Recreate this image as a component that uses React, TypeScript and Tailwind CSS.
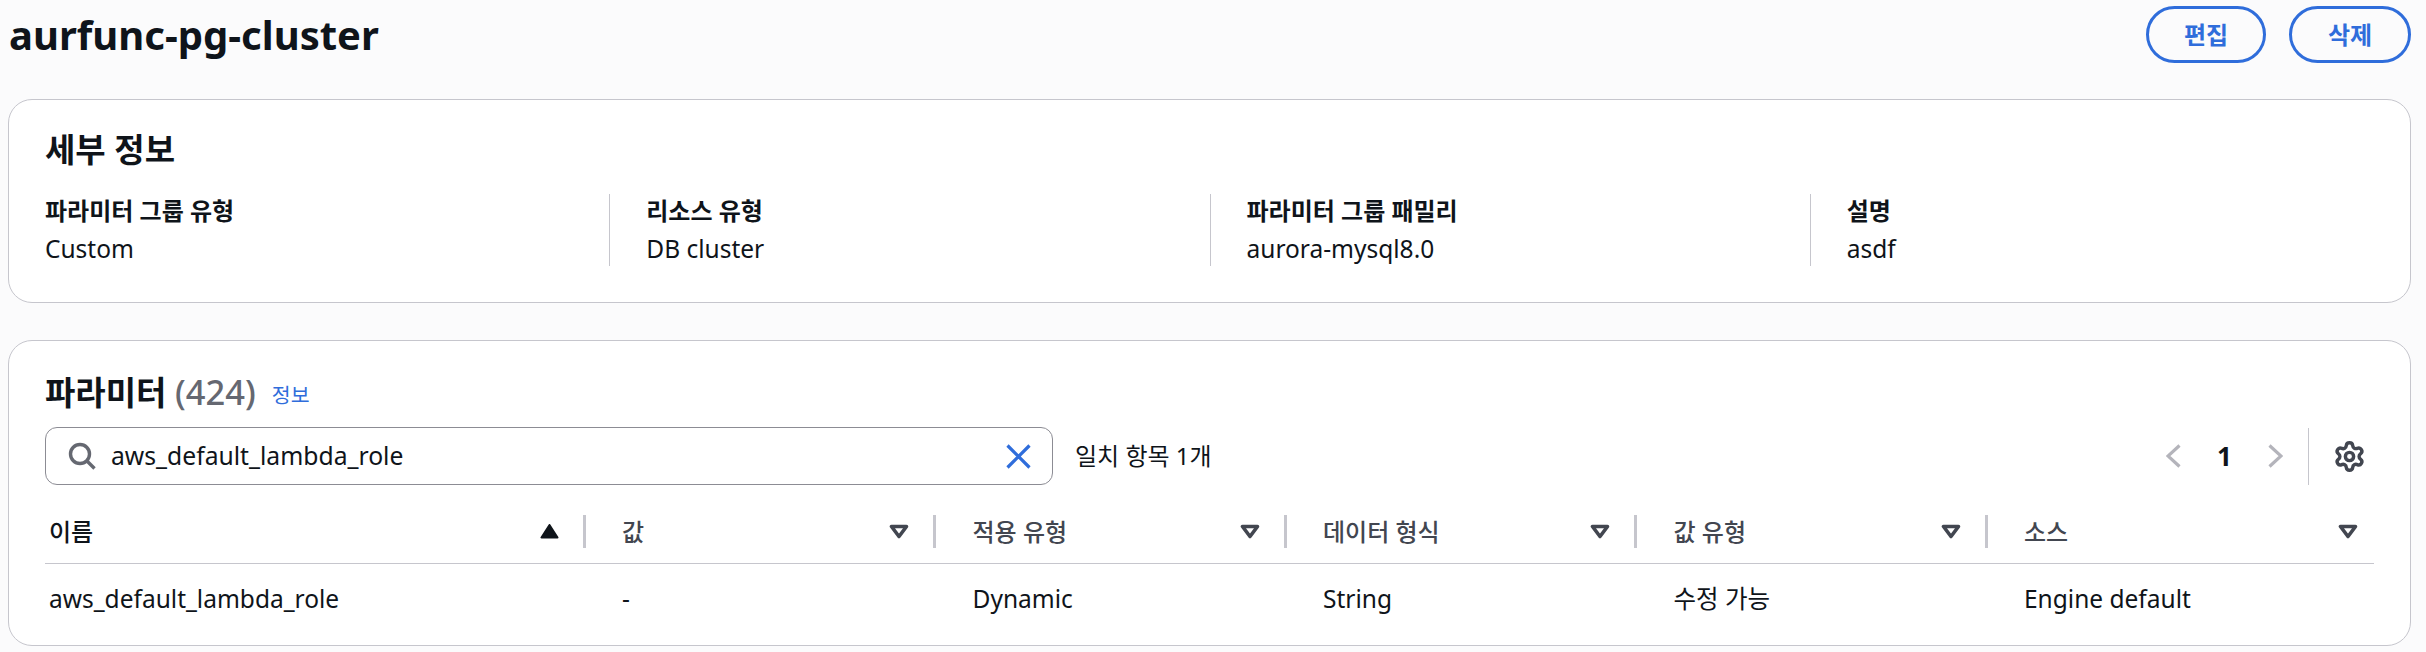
import { Settings } from 'lucide-react';

const details = [
  { label: '파라미터 그룹 유형', value: 'Custom' },
  { label: '리소스 유형', value: 'DB cluster' },
  { label: '파라미터 그룹 패밀리', value: 'aurora-mysql8.0' },
  { label: '설명', value: 'asdf' },
];

const columns = ['적용 유형', '데이터 형식', '값 유형'];

function SortDown() {
  return (
    <svg width="20" height="15" viewBox="0 0 20 15" className="shrink-0">
      <path d="M2.5 2.5h15L10 12.5z" fill="none" stroke="#424650" strokeWidth="3.6" strokeLinejoin="round" />
    </svg>
  );
}

function SortUp() {
  return (
    <svg width="19" height="15" viewBox="0 0 19 15" className="shrink-0">
      <path d="M1.5 13.5h16L9.5 1z" fill="#0f141a" stroke="#0f141a" strokeWidth="2" strokeLinejoin="round" />
    </svg>
  );
}

function HeaderCell({ label, last }: { label: string; last?: boolean }) {
  return (
    <div className="flex h-[33px] items-center justify-between border-l-[3px] border-[#c6c6cd] pl-[36.5px]">
      <span className="text-[24px] font-medium text-[#424650]">{label}</span>
      <span className={last ? 'mr-[16px]' : 'mr-[24px]'}>
        <SortDown />
      </span>
    </div>
  );
}

export default function App() {
  return (
    <div className="h-[652px] w-[2426px] overflow-hidden bg-[#fbfbfc] font-['Noto_Sans','Noto_Sans_CJK_KR',sans-serif] text-[#0f141a]">
      {/* Page header */}
      <div className="flex h-[99px] items-start justify-between pl-[9px] pr-[15px] pt-[6px]">
        <h1 className="text-[40px] font-bold leading-[58px]">aurfunc-pg-cluster</h1>
        <div className="flex gap-[23px]">
          <button className="h-[57px] w-[120px] rounded-full border-[3px] border-[#2f6ddb] text-[24px] font-bold text-[#2f6ddb]">편집</button>
          <button className="h-[57px] w-[122px] rounded-full border-[3px] border-[#2f6ddb] text-[24px] font-bold text-[#2f6ddb]">삭제</button>
        </div>
      </div>

      {/* Details */}
      <section className="mx-[8px] h-[204px] w-[2403px] rounded-[24px] border border-[#c6c6cd] bg-white pt-[29px]">
        <h2 className="pl-[36px] text-[33px] font-bold leading-[42px]">세부 정보</h2>
        <div className="mt-[23px] grid grid-cols-4">
          {details.map((item, i) => (
            <div key={item.label} className={`h-[72px] px-[36px] ${i > 0 ? 'border-l border-[#c6c6cd]' : ''}`}>
              <div className="text-[24px] font-bold leading-[34px]">{item.label}</div>
              <div className="text-[24.5px] leading-[41px]">{item.value}</div>
            </div>
          ))}
        </div>
      </section>

      {/* Parameters */}
      <section className="mx-[8px] mt-[37px] h-[306px] w-[2403px] rounded-[24px] border border-[#c6c6cd] bg-white px-[36px] pt-[30px]">
        <div className="flex items-center">
          <h2 className="text-[33px] font-bold leading-[42px]">
            파라미터 <span className="text-[34.5px] font-medium text-[#656871]">(424)</span>
          </h2>
          <a className="ml-[16px] mt-[6px] text-[20.5px] text-[#2f6ddb]">정보</a>
        </div>

        <div className="mt-[13px] flex h-[58px] items-center">
          <div className="flex h-[58px] w-[1008px] items-center rounded-[12px] border border-[#8c8c94] pl-[22px] pr-[21px]">
            <svg width="28" height="28" viewBox="0 0 28 28" fill="none" stroke="#656871" strokeWidth="3.4" className="shrink-0">
              <circle cx="12" cy="12" r="9.5" />
              <path d="M19 19l7.5 7.5" />
            </svg>
            <span className="ml-[15px] flex-1 text-[24.7px]">aws_default_lambda_role</span>
            <svg width="25" height="25" viewBox="0 0 25 25" fill="none" stroke="#2f6ddb" strokeWidth="3.2" className="shrink-0">
              <path d="M1.5 1.5l22 22M23.5 1.5l-22 22" />
            </svg>
          </div>
          <span className="ml-[22px] text-[24px]">일치 항목 1개</span>

          <div className="ml-auto flex items-center">
            <svg width="15" height="24" viewBox="0 0 15 24" fill="none" stroke="#b4b4bb" strokeWidth="3.2">
              <path d="M13.5 1.5L2 12l11.5 10.5" />
            </svg>
            <span className="mx-[36px] w-[15px] text-center text-[26px] font-bold">1</span>
            <svg width="15" height="24" viewBox="0 0 15 24" fill="none" stroke="#b4b4bb" strokeWidth="3.2">
              <path d="M1.5 1.5L13 12 1.5 22.5" />
            </svg>
            <div className="ml-[25px] h-[57px] border-l border-[#c6c6cd]" />
            <Settings size={33} strokeWidth={2.5} color="#424650" className="ml-[24px] mr-[8px]" />
          </div>
        </div>

        {/* Table */}
        <div className="mt-[30px] w-[2329px]">
          <div className="grid grid-cols-[537.5px_350.5px_350.5px_350.5px_350.5px_389.5px] border-b border-[#c6c6cd] pb-[15px]">
            <div className="flex h-[33px] items-center justify-between pl-[4px]">
              <span className="text-[24px] font-medium">이름</span>
              <span className="mr-[24px]">
                <SortUp />
              </span>
            </div>
            <HeaderCell label="값" />
            {columns.map((c) => (
              <HeaderCell key={c} label={c} />
            ))}
            <HeaderCell label="소스" last />
          </div>
          <div className="grid grid-cols-[537.5px_350.5px_350.5px_350.5px_350.5px_389.5px] pt-[17px] text-[24.5px] leading-[36px]">
            <div className="pl-[4px]">aws_default_lambda_role</div>
            <div className="pl-[39.5px]">-</div>
            <div className="pl-[39.5px]">Dynamic</div>
            <div className="pl-[39.5px]">String</div>
            <div className="pl-[39.5px]">수정 가능</div>
            <div className="pl-[39.5px]">Engine default</div>
          </div>
        </div>
      </section>
    </div>
  );
}
